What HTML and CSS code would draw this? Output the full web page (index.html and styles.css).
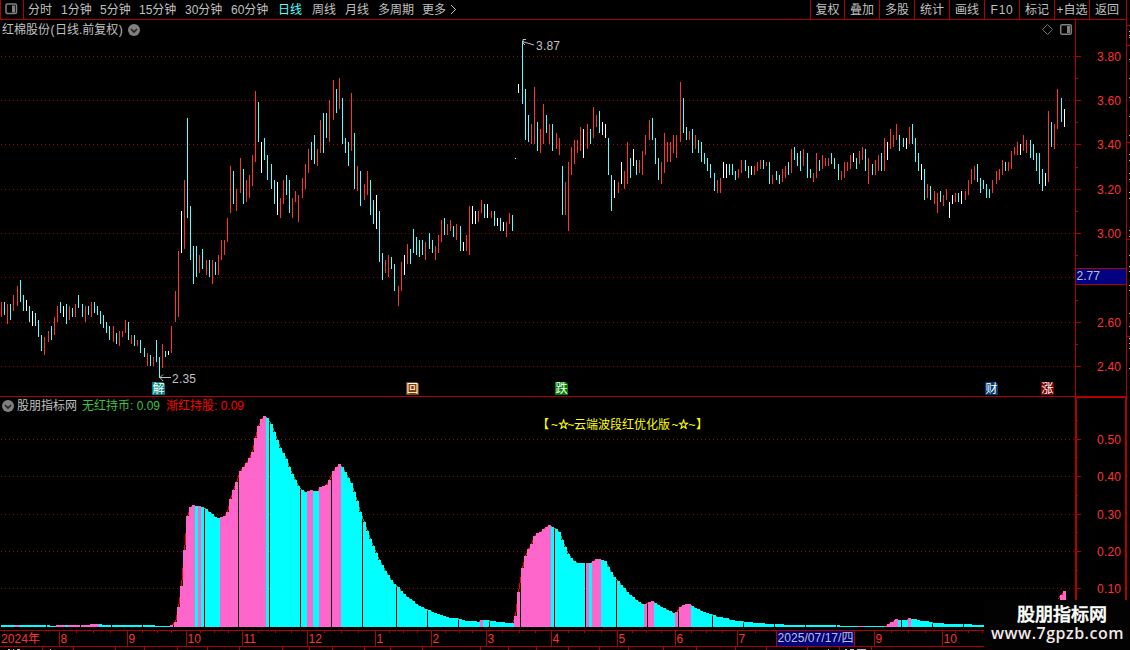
FILE: index.html
```html
<!DOCTYPE html>
<html lang="zh-CN">
<head>
<meta charset="utf-8">
<title>红棉股份</title>
<link rel="stylesheet" href="styles.css">
</head>
<body>
<div class="app">
  <header class="toolbar">
    <div class="layout-toggle">
      <svg width="13" height="12" viewBox="0 0 13 12"><rect class="icon-frame" x="1" y="1" width="10.5" height="9.5" rx="1.5"/><rect class="icon-fill" x="7" y="2.5" width="3" height="7"/></svg>
    </div>
    <nav class="periods">
      <span>分时</span><span>1分钟</span><span>5分钟</span><span>15分钟</span><span>30分钟</span><span>60分钟</span><span class="active">日线</span><span>周线</span><span>月线</span><span>多周期</span><span>更多</span>
      <svg width="8" height="12" viewBox="0 0 8 12"><path class="chevron" d="M1 1L5.5 5.5L1 10"/></svg>
    </nav>
    <nav class="tools">
      <span>复权</span><span>叠加</span><span>多股</span><span>统计</span><span>画线</span><span class="spaced">F10</span><span>标记</span><span>+自选</span><span>返回</span>
    </nav>
  </header>
  <section class="panel price">
    <svg class="plot" id="price" width="1130" height="377" viewBox="0 20 1130 377"></svg>
    <div class="caption"><span>红棉股份<i>(</i>日线.前复权<i>)</i></span>
      <svg width="12" height="12" viewBox="0 0 12 12"><circle class="dot" cx="6" cy="6" r="6"/><path class="dot-arrow" d="M3 5L6 8L9 5"/></svg>
    </div>
  </section>
  <section class="panel indicator">
    <svg class="plot" id="wave" width="1130" height="233" viewBox="0 397 1130 233"></svg>
    <div class="caption">
      <svg width="12" height="12" viewBox="0 0 12 12"><circle class="dot" cx="6" cy="6" r="6"/><path class="dot-arrow" d="M3 5L6 8L9 5"/></svg>
      <span class="name">股朋指标网</span><span class="hold">无红持币: 0.09</span><span class="rise">渐红持股: 0.09</span>
    </div>
  </section>
  <footer class="timeline">
    <svg class="plot" id="time" width="1130" height="20" viewBox="0 630 1130 20"></svg>
  </footer>
  <div class="brand"><strong>股朋指标网</strong><span>www.7gpzb.com</span></div>
</div>
<script src="chart.js"></script>
</body>
</html>
```
FILE: styles.css
```css
* { box-sizing: border-box; }
body { margin: 0; background: #000; overflow: hidden; }
.app {
  position: relative; width: 1130px; height: 650px; overflow: hidden;
  display: flex; flex-direction: column;
  background: #000; color: #c0c0c0;
  font: 12px/18px "Liberation Sans", "Noto Sans CJK SC", sans-serif;
}
.toolbar { display: flex; width: 1127px; height: 20px; flex: none; border: solid #b00000; border-width: 0 1px 1px; white-space: nowrap; }
.layout-toggle { width: 23px; padding: 3px 0 0 4px; border-right: 1px solid #b00000; line-height: 0; }
.icon-frame { fill: none; stroke: #808080; stroke-width: 1.5; }
.icon-fill { fill: #808080; }
.periods { display: grid; grid-template-columns: 33px 39px 39px 46px 46px 47px 34px 33px 33px 44px 28px 10px; align-items: center; padding-left: 4px; flex: 1; }
.chevron { fill: none; stroke: #c0c0c0; }
.active { color: #54ffff; }
.tools { display: grid; grid-template-columns: 34px repeat(8, 35px) ; width: 316px; }
.tools span { border-left: 1px solid #b00000; text-align: center; line-height: 20px; height: 19px; }
.tools .spaced { letter-spacing: .7px; }
.panel { position: relative; flex: none; }
.price { height: 377px; }
.indicator { height: 233px; }
.plot { display: block; font-size: 12px; }
.caption { position: absolute; top: 0; left: 2px; height: 19px; display: flex; align-items: center; gap: 5px; white-space: nowrap; }
.caption i { font-style: normal; padding: 0 .5px; }
.indicator .caption { top: -1px; gap: 3px; }
.dot { fill: #808080; }
.dot-arrow { fill: none; stroke: #202020; stroke-width: 1.6; }
.name { margin-right: 2px; }
.hold { color: #40c040; width: 81px; }
.rise { color: #f00; }
.timeline { flex: none; height: 20px; }
.line { fill: #b00000; }
.grid { stroke: #a00000; stroke-width: 1; stroke-dasharray: 1 3; }
.r { fill: #ff3232; }
.c { fill: #54ffff; }
.w { fill: #fff; }
.pink { fill: #ff66cc; }
.cyan { fill: #0ff; }
.up, .down { fill: none; stroke-width: 1; }
.up { stroke: #f00; }
.down { stroke: #40a040; }
.gray { fill: #c0c0c0; }
.navy { fill: #000080; }
.yellow { fill: #ff0; }
.star { fill: #ff0; stroke: #ff0; stroke-width: .4; }
.pointer { fill: none; stroke: #c0c0c0; }
.brand {
  position: absolute; right: 0; bottom: 0; width: 146px; height: 50px; background: #020202; color: #fff;
  display: flex; flex-direction: column; align-items: center; padding-top: 3px;
}
.brand strong { font: 500 18px/21px "Noto Sans CJK SC", sans-serif; padding-left: 10px; -webkit-text-stroke: .5px #fff; }
.brand span { font: 600 16px/18px "Open Sans", sans-serif; letter-spacing: .5px; color: #f2e8e8; padding-left: 1px; }
```
FILE: chart.js
```js
const NS = 'http://www.w3.org/2000/svg';
function add(parent, tag, attrs, text) {
  const el = document.createElementNS(NS, tag);
  for (const k in attrs) el.setAttribute(k, attrs[k]);
  if (text) el.textContent = text;
  parent.appendChild(el);
  return el;
}
function box(p, cls, x, y, w, h) {
  return add(p, 'rect', { class: cls, x, y, width: w, height: h, 'shape-rendering': 'crispEdges' });
}
function label(p, cls, x, y, text, len) {
  const a = { class: cls, x, y };
  if (len) a.textLength = len;
  return add(p, 'text', a, text);
}
const price = document.getElementById('price');
const wave = document.getElementById('wave');
const time = document.getElementById('time');

function rows(p, ys) {
  ys.forEach(y => add(p, 'line', { class: 'grid', x1: 1, x2: 1075, y1: y + .5, y2: y + .5, 'shape-rendering': 'crispEdges' }));
}
rows(price, [56, 100, 144, 189, 233, 277, 322, 366]);
rows(wave, [439, 476, 514, 551, 588]);

// Blocks of bars: origin in px, then "colour x top bottom" in thirds of a pixel.
const blocks = [
  [0, 260, `r4 126 171,c13 126 165,r22 132 192,c31 132 180,r40 105 153,r52 78 138,c61 60 126,c70 105 153,w79 120 153,c88 138 186,w97 153 198,c106 159 198,c115 180 231,c124 225 273,r133 231 285,r145 213 246,c154 198 240,r163 171 225,r172 138 186,c181 126 159,w190 138 171,c199 132 192,r208 138 180,c217 144 171,r226 132 171,c235 105 144,c247 132 171,r256 138 186,c265 138 165,r274 126 171,c283 126 159,c292 138 165,c301 153 192,c310 165 204,c319 186 219,c328 198 240,r340 198 246,c349 219 252,r358 213 258,r367 213 231,r376 180 219,c385 186 240,r394 225 252,c403 225 258,r412 240 258,c421 240 279,c433 264 291,r442 279 318,c451 285 318,r460 291 318,c469 240 306,c478 291 354,r487 252 324,c496 273 291,w505 273 285,r514 198 279,r526 93 186`],
  [160, 70, `r55 543 741,w64 423 549,r73 330 537,c82 144 444,c91 408 570,c100 528 642,c109 528 621,r118 555 609,c127 537 597,r139 570 615,c148 570 621,r157 570 642,c166 576 615,r175 555 615,r184 510 570,r193 510 555,r202 444 516,r211 288 429,c220 303 402,r229 357 423,r241 264 369,c250 297 402,r259 330 396,r268 315 384,r277 255 348,r286 63 276,c295 96 216,w304 216 309,c313 204 270,c322 255 330,c334 282 357,c343 330 402,w352 336 435,r361 384 444,r370 330 402,c379 315 375,c388 330 429,r397 384 444,r406 363 396,r415 375 456,r427 324 384,r436 282 357,r445 237 309,c454 216 270,c463 195 282,r472 237 288,r481 150 249,c490 129 249,c499 129 204,r508 90 216,r520 30 150,c529 57 129,r538 24 117,c547 84 222,c556 204 249,c565 216 288,r574 69 243,c583 189 357,r592 288 363,c601 303 408,r613 342 390,r622 303 375,c631 330 435,c640 390 462,w649 375 477,c658 423 576,c667 549 630,r676 570 609,r685 555 621,c694 561 597,c703 582 663`],
  [380, 190, `r55 288 348,r64 216 303,w73 195 255,r82 162 222,c91 177 222,c100 117 189,c109 141 195,c118 150 201,c127 150 195,r136 156 210,c148 129 177,c157 150 189,r166 168 210,r175 135 189,r184 90 156,c193 84 135,r202 102 135,r211 90 123,c220 108 141,r229 102 150,c241 108 183,w250 156 183,r259 135 183,r268 48 195,w277 48 102,w286 63 102,r295 63 96,r304 30 69,c313 42 84,w322 42 84,r334 63 84,c343 63 108,w352 84 108,c361 84 123,w370 96 123,r379 96 141,r388 69 102,c397 75 123`],
  [500, 30, `w46 384 387,w55 162 189,c67 33 222,c76 177 330,c85 255 336,r94 282 342,r103 171 342,c112 276 363,r121 297 369,r130 222 342,c139 255 309,r148 282 342,c157 282 363,r169 309 357,r178 324 375,c187 408 555,r196 456 555,r205 396 603,r214 351 435,r223 330 402,r232 330 369,r241 291 363,w250 297 384,r262 282 357,c271 297 342,r280 231 324,r289 255 291,c298 243 309,w307 276 315,w316 282 324,c325 324 435,c334 435 543,w343 450 504,r355 456 489,w364 396 462,r373 423 477,r382 336 462,c391 384 444,w400 357 408,c409 390 435,r418 390 429,r427 363 435,r436 315 375,r448 270 330,c457 264 330,c466 324 402,c475 384 450,r484 396 462,r493 309 429,r502 336 396,r511 336 396,r520 315 369,r529 315 384,r541 156 336,c550 204 309,c559 291 330,r568 303 330,c577 297 369,r586 315 357,c595 330 369,c604 336 396`],
  [700, 120, `c13 99 132,c22 114 153,c31 132 174,c43 159 213,r52 180 219,r61 174 219,w70 126 174,w79 132 174,c88 132 165,c97 132 165,c106 153 180,r115 147 174,r124 120 159,c136 120 153,c145 138 174,w154 138 165,r163 138 165,r172 126 153,r181 120 147,c190 120 147,r199 126 138,c208 126 192,r217 165 192,c229 153 180,c238 165 192,r247 147 186,r256 138 174,c265 126 165,r274 87 159,c283 81 120,c292 99 138,c301 93 153,r310 87 138,c322 99 174,c331 147 174,r340 159 186,r349 99 174,c358 120 153,r367 105 147,r376 114 138,r385 114 138,c394 99 132,c403 114 147,c415 132 180,r424 153 180,r433 126 174,r442 126 153,r451 105 147,w460 99 126,c469 114 147,r478 93 132,r487 81 120,c496 87 153,r505 114 192,c517 132 165,r526 120 165,r535 105 153,c544 99 153,r553 54 153,w562 66 120,r571 27 87,r580 45 81,r589 12 60,c598 45 93`],
  [900, 80, `c10 174 201,w19 174 207,r28 141 192,c37 132 192,c46 174 246,c55 219 273,w64 252 300,c73 267 360,r82 312 354,c91 318 360,r103 333 372,r112 339 399,c121 333 366,r130 345 378,r139 327 360,w148 366 414,w157 345 372,r166 339 366,c175 339 366,w184 333 372,r196 333 360,r205 300 345,r214 267 312,r223 258 300,c232 252 306,c241 294 339,c250 300 327,c259 312 354,c268 327 354,r277 300 339,r289 273 312,r298 267 300,r307 240 285,c316 246 273,r325 246 273,r334 213 267,r343 201 225,r352 186 225,w361 192 225,r370 165 213,r379 180 219,c391 180 234,c400 192 240,c409 219 273,c418 219 312,c427 267 333,w436 279 318,r445 93 306,c454 126 201,r463 132 207,r472 27 147,c484 54 126,w493 87 141`]
];
blocks.forEach(([ox, oy, data]) => data.split(',').forEach(s => {
  const [x, t, b] = s.slice(1).split(' ').map(Number);
  const top = oy + Math.round(t / 3);
  box(price, s[0], ox + Math.floor(x / 3), top, 1, oy + Math.round(b / 3) - top);
}));

// Steps of the wave: "colour start end top" in thirds of a pixel.
const steps = [
  [0, 395, `c3 45 690,p45 57 690,c57 138 690,c141 150 690,c150 168 693,p168 195 690,c195 204 690,p204 240 690,p243 270 690,p270 297 687,c297 306 687,c306 333 690,c336 426 690,c429 465 690,c465 510 693,p510 519 690,p522 531 681,p531 540 636,p540 549 573,p549 558 465,p558 567 363,p567 576 336,p576 585 330,c585 594 333,p594 603 333,c603 612 336,c615 624 342,c624 633 351,c633 642 357,c642 651 366,c651 660 369,p660 669 366,p669 678 363,p678 687 351,p687 696 312,p696 705 285,p705 714 261,p717 726 228,p726 735 216,p735 744 204,p744 753 189,p753 762 171,p762 771 129,p771 780 93,p780 789 72,p789 798 63,c798 807 69,c810 819 87,c819 828 111,c828 837 135,c837 846 159,c846 855 174,c855 864 192,c864 873 216,c873 882 237,c882 891 255,c891 900 273,c903 912 285,c912 921 291,p921 930 288,p930 939 285,c939 957 288,p957 966 276,p966 975 273,p975 984 270,p984 993 255,p996 1005 228,p1005 1014 216,p1014 1023 207,c1023 1032 216,c1032 1041 231,c1041 1050 249,c1050 1059 264,c1059 1068 291`],
  [340, 500, `c48 57 3,c57 66 36,c69 78 66,c78 87 93,c87 96 117,c96 105 138,c105 114 159,c114 123 180,c123 132 195,c132 141 213,c141 150 225,c150 159 240,c159 168 252,c171 180 261,c180 189 273,c189 198 282,c198 207 291,c207 216 297,c216 225 303,c225 234 312,c234 243 318,c243 252 321,c252 261 327,c264 273 330,c273 282 336,c282 291 339,c291 300 342,c300 309 345,c309 318 348,c318 327 351,c327 354 354,c357 366 357,c366 375 360,c375 411 363,c411 420 366,p420 429 360,c429 447 360,c450 468 363,c468 495 366,c495 522 369,p522 531 348,p531 540 276,p543 552 204,p552 561 168,p561 570 147,p570 579 132,p579 588 108,p588 597 99,p597 606 96,p606 615 87,p615 624 81,p624 633 75,c633 642 81,c645 654 87,c654 663 96,c663 672 120,c672 681 141,c681 690 162,c690 699 174,c699 708 183,c708 735 189,p738 747 189,c747 756 189,p756 765 183,p765 783 177,c783 792 180,c792 801 183,c801 810 201,c810 819 216,c819 828 231,c831 840 243,c840 849 255,c849 858 264,c858 867 276,c867 876 285,c876 885 291,c885 894 300,c894 903 306,c903 912 312,p912 921 312,p924 933 306,p933 942 303,c942 951 309,c951 960 315,c960 969 321,c969 978 324,c978 987 330,c987 996 333,c996 1005 339,p1005 1014 336,p1017 1026 321,p1026 1035 315,p1035 1053 312,c1053 1062 318,c1062 1071 324,c1071 1080 327`],
  [700, 560, `c0 9 153,c9 18 156,c18 27 159,c27 36 162,c39 48 165,c48 69 171,c69 87 174,c87 105 180,c105 129 183,c132 159 186,c159 195 189,c195 222 192,c225 252 192,c252 315 195,c318 408 195,c411 420 195,c420 474 198,p474 492 198,c492 552 198,p552 561 198,p561 570 192,p570 582 186,p582 585 180,p585 594 177,c594 603 180,c606 624 180,p624 633 174,c633 651 177,c651 660 180,c660 687 183,c687 696 186,c699 732 189,c732 789 192,c792 816 192,c816 852 195,p1080 1089 105,p1089 1098 93`]
];
const tops = [];
const trace = add(wave, 'g', { 'shape-rendering': 'crispEdges' });
const bars = add(wave, 'g', {});
steps.forEach(([ox, oy, data]) => data.split(',').forEach(s => {
  const [a, b, t] = s.slice(1).split(' ').map(Number);
  const x = ox + a / 3, w = (b - a) / 3, y = oy + Math.round(t / 3);
  box(bars, s[0] === 'p' ? 'pink' : 'cyan', x, y, w, 627 - y);
  const inset = Math.min(1.5, w / 2);
  tops.push({ start: x + inset, end: x + w - inset, y: y + .5 });
}));
for (let i = 1; i < tops.length; i++) {
  const p = tops[i - 1], q = tops[i];
  if (q.start - p.end < 12 && p.y !== q.y) add(trace, 'path', { class: q.y < p.y ? 'up' : 'down', d: `M${p.end} ${p.y}L${q.start} ${q.y}` });
}
add(trace, 'path', { class: 'up', d: 'M1058 599L1064 592' });

// Price axis.
box(price, 'line', 1075, 20, 1, 377);
box(price, 'line', 1126, 20, 1, 377);
box(price, 'line', 0, 396, 1127, 1);
[[56, '3.80'], [100, '3.60'], [144, '3.40'], [189, '3.20'], [233, '3.00'], [322, '2.60'], [366, '2.40']].forEach(([y, t]) => {
  box(price, 'line', 1076, y, 5, 1);
  label(price, 'r', 1097, y + 5, t, 24);
});
[78, 122, 167, 211, 255, 300, 344].forEach(y => box(price, 'line', 1076, y, 2, 1));
box(price, 'navy', 1076, 269, 50, 15);
box(price, 'line', 1076, 268, 50, 1);
box(price, 'line', 1076, 284, 50, 1);
label(price, 'gray', 1076.5, 280, '2.77', 23.5);
[25, 45, 142, 239, 336].forEach(y => box(price, 'line', 1127, y, 3, 1));
[31, 35, 37, 59, 78, 97, 116, 135, 154, 160, 173, 179, 192, 198, 230, 236, 255, 266, 271, 285, 290, 313, 326, 338, 343, 348, 368].forEach(y => box(price, 'gray', 1129, y, 1, 1));

// Extremes.
label(price, 'gray', 536, 50, '3.87', 24);
add(price, 'path', { class: 'pointer', d: 'M522.5 41.5L534 45M526 39.5H523V43L525 45' });
label(price, 'gray', 172, 383, '2.35', 24);
add(price, 'path', { class: 'pointer', d: 'M160 377.5H171M163 374.5L160 377.5L163 381' });

// Event flags.
[[152, '#008080', '解'], [406, '#804000', '回'], [555, '#008000', '跌'], [985, '#003a70', '财'], [1041, '#800000', '涨']].forEach(([x, fill, t]) => {
  add(price, 'path', { d: `M${x} 382h11l2 2v11h-13z`, fill });
  label(price, 'w', x + .5, 393, t);
});

// Window icons.
add(price, 'path', { d: 'M1047.5 24.5L1052.5 29.5L1047.5 34.5L1042.5 29.5Z', fill: 'none', stroke: '#707070' });
add(price, 'rect', { class: 'icon-frame', x: 1060.7, y: 24.7, width: 10.6, height: 9.6, rx: 1.5 });
add(price, 'rect', { class: 'icon-fill', x: 1067, y: 26, width: 3, height: 7 });

// Indicator axis and title.
box(wave, 'line', 1075, 397, 52, 1);
box(wave, 'line', 1075, 397, 2, 233);
box(wave, 'line', 1125, 397, 2, 233);
[[439, '0.50'], [476, '0.40'], [514, '0.30'], [551, '0.20'], [588, '0.10']].forEach(([y, t]) => {
  box(wave, 'line', 1077, y, 4, 1);
  label(wave, 'r', 1097, y + 5, t, 24);
});
[420, 457, 495, 532, 570].forEach(y => box(wave, 'line', 1077, y, 1, 1));
[[537, '【'], [551, '~'], [567.5, '~'], [574, '云端波段红优化版', 96], [671.5, '~'], [688.5, '~'], [696, '】']].forEach(([x, t, n]) => label(wave, 'yellow', x, 428.5, t, n));
[558.5, 678.5].forEach(x => add(wave, 'text', { class: 'star', x, y: 428, 'font-size': 10 }, '☆'));

// Time axis.
box(time, 'line', 0, 630, 984, 1);
box(time, 'line', 0, 646, 984, 1);
label(time, 'r', 1, 643, '2024年', 39);
[[59, '8'], [127, '9'], [186, '10'], [242, '11'], [307, '12'], [375, '1'], [431, '2'], [486, '3'], [551, '4'], [617, '5'], [675, '6'], [737, '7'], [874, '9'], [942, '10']].forEach(([x, t]) => {
  box(time, 'line', x, 630, 1, 16);
  label(time, 'r', x + 1.5, 643, t);
});
[76, 93, 110, 142, 157, 171, 200, 214, 228, 258, 275, 291, 324, 341, 358, 389, 403, 417, 445, 459, 472, 502, 519, 535, 568, 584, 601, 632, 646, 661, 691, 706, 722, 755, 891, 908, 925, 955, 968, 982].forEach(x => box(time, 'line', x, 631, 1, 2));
[42, 73, 115, 144, 177, 207, 239, 282, 309, 332, 364, 390, 422, 480, 508, 536, 568, 599, 628, 663, 696, 735, 766, 807, 839, 871].forEach(x => box(time, 'line', x, 647, 1, 3));
box(time, 'navy', 777, 631, 77, 15);
box(time, 'line', 776, 630, 1, 17);
box(time, 'line', 854, 630, 1, 17);
label(time, 'gray', 777.5, 642, '2025/07/17/四', 76);
[[8, 2], [13, 1], [17, 3], [50, 1], [828, 1], [845, 2], [850, 4], [857, 9]].forEach(([x, w]) => box(time, 'gray', x, 649, w, 1));
```
